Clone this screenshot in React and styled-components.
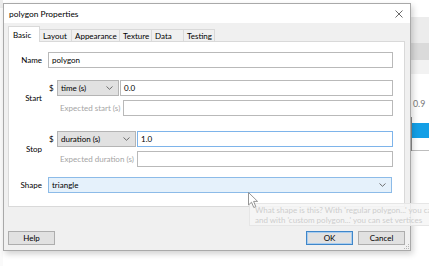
import styled, { createGlobalStyle } from 'styled-components';

const GlobalStyle = createGlobalStyle`
  html, body {
    margin: 0;
    padding: 0;
    background: #ffffff;
    overflow: hidden;
  }
  body {
    font-family: Lato, "Open Sans", "Liberation Sans", sans-serif;
    font-size: 8px;
    color: #000;
  }
`;

const Screen = styled.div`
  position: relative;
  display: flex;
  width: 429px;
  height: 266px;
  overflow: hidden;
  background: #ffffff;
`;

const Gutter = styled.div`
  width: 3px;
  background: linear-gradient(#ececec 0, #ececec 8px, #fafafa 8px);
`;

const Dialog = styled.div`
  margin-top: 3px;
  width: 408px;
  height: 248px;
  display: flex;
  flex-direction: column;
  border: 1px solid #a9a9a9;
  box-sizing: border-box;
  background: #f0f0f0;
  box-shadow: 2px 3px 6px rgba(0, 0, 0, 0.18);
  z-index: 1;
`;

const TitleBar = styled.div`
  height: 19px;
  display: flex;
  align-items: center;
  justify-content: space-between;
  padding: 0 7px 0 5px;
  background: #ffffff;
  font-size: 8.4px;
`;

const Body = styled.div`
  flex: 1;
  display: flex;
  flex-direction: column;
  padding: 3px 5px 5px 4px;
`;

const TabStrip = styled.div`
  display: flex;
  align-items: flex-end;
  height: 16px;
`;

const Tab = styled.div`
  width: ${(p) => p.$width}px;
  height: ${(p) => (p.$active ? 16 : 13)}px;
  box-sizing: border-box;
  padding-left: ${(p) => (p.$active ? 4 : 3)}px;
  display: flex;
  align-items: center;
  background: ${(p) => (p.$active ? '#ffffff' : '#f0f0f0')};
  border: 1px solid #d9d9d9;
  border-bottom: ${(p) => (p.$active ? 'none' : '1px solid #d9d9d9')};
  margin-left: ${(p) => (p.$active ? 0 : -1)}px;
  position: relative;
  z-index: ${(p) => (p.$active ? 2 : 1)};
  white-space: nowrap;
`;

const Panel = styled.div`
  height: 166px;
  box-sizing: border-box;
  margin-top: -1px;
  background: #ffffff;
  border: 1px solid #d9d9d9;
  padding: 10px 11px 0 0;
  display: flex;
  flex-direction: column;
`;

const Row = styled.div`
  display: flex;
  align-items: center;
  margin-top: ${(p) => p.$top || 0}px;
`;

const Label = styled.div`
  width: 33px;
  margin-right: 6px;
  text-align: right;
`;

const Fields = styled.div`
  flex: 1;
  display: flex;
  flex-direction: column;
  gap: 4px;
`;

const Line = styled.div`
  display: flex;
  align-items: center;
`;

const Dollar = styled.div`
  width: 8px;
  padding-left: 1px;
`;

const Input = styled.div`
  flex: 1;
  height: 16px;
  box-sizing: border-box;
  border: 1px solid ${(p) => (p.$focus ? '#7eb4ea' : '#b9b9b9')};
  padding-left: 3px;
  display: flex;
  align-items: center;
  background: #ffffff;
`;

const Select = styled.div`
  width: ${(p) => (p.$width ? `${p.$width}px` : 'auto')};
  flex: ${(p) => (p.$width ? 'none' : 1)};
  height: 16px;
  box-sizing: border-box;
  margin-right: 1px;
  display: flex;
  align-items: center;
  justify-content: space-between;
  padding: 0 5px 0 3px;
  background: ${(p) => (p.$light ? '#e5f1fb' : '#e1e1e1')};
  border: 1px solid ${(p) => (p.$light ? '#8cbbe8' : '#b4b4b4')};
`;

const Hint = styled.div`
  width: ${(p) => p.$width}px;
  padding-left: 3px;
  box-sizing: border-box;
  color: #a5a5a5;
  white-space: nowrap;
`;

const Footer = styled.div`
  flex: 1;
  display: flex;
  align-items: flex-end;
  justify-content: space-between;
`;

const ButtonGroup = styled.div`
  display: flex;
  gap: 5px;
`;

const Button = styled.div`
  width: 47px;
  height: 14px;
  box-sizing: border-box;
  display: flex;
  align-items: center;
  justify-content: center;
  background: #e1e1e1;
  border: 1px solid ${(p) => (p.$default ? '#3f86c9' : '#adadad')};
  box-shadow: ${(p) => (p.$default ? 'inset 0 0 0 1px #a9cdef' : 'none')};
`;

const BackApp = styled.div`
  flex: 1;
  display: flex;
  flex-direction: column;
`;

const Band = styled.div`
  height: ${(p) => p.$h}px;
  background: ${(p) => p.$bg};
`;

const BackValue = styled.div`
  height: 14px;
  margin-top: 22px;
  padding-left: 2px;
  font-size: 8.8px;
  color: #777;
  display: flex;
  align-items: center;
`;

const BackTable = styled.div`
  margin-top: 7px;
  border-left: 1px solid #8a8a8a;
  display: flex;
  flex-direction: column;
`;

const Selected = styled.div`
  margin-top: 6px;
  height: 15px;
  background: #149fe6;
`;

const BackRow = styled.div`
  height: 12px;
  border-bottom: 1px solid #bdbdbd;
`;

const Tooltip = styled.div`
  position: absolute;
  left: 249px;
  top: 203px;
  width: 200px;
  height: 23px;
  padding: 2px 5px;
  box-sizing: border-box;
  background: rgba(246, 246, 246, 0.85);
  border: 1px solid #e6e6e6;
  font-size: 8px;
  line-height: 9.5px;
  color: #cdcdcd;
  white-space: nowrap;
  z-index: 3;
`;

const Cursor = styled.svg`
  position: absolute;
  left: 248px;
  top: 192px;
  z-index: 4;
`;

const Grip = styled.svg`
  position: absolute;
  left: 404px;
  top: 244px;
  z-index: 2;
`;

function Chevron() {
  return (
    <svg width="7" height="4" viewBox="0 0 7 4">
      <path d="M0.5 0.5 L3.5 3.3 L6.5 0.5" fill="none" stroke="#606060" strokeWidth="0.9" />
    </svg>
  );
}

function Close() {
  return (
    <svg width="8" height="8" viewBox="0 0 8 8">
      <path d="M0.5 0.5 L7.5 7.5 M7.5 0.5 L0.5 7.5" stroke="#444" strokeWidth="0.8" />
    </svg>
  );
}

const tabs = [
  { name: 'Basic', width: 32 },
  { name: 'Layout', width: 33 },
  { name: 'Appearance', width: 49 },
  { name: 'Texture', width: 33 },
  { name: 'Data', width: 33 },
  { name: 'Testing', width: 32 },
];

function TimeGroup({ label, unit, value, hint, selectWidth, hintWidth, focus, top }) {
  return (
    <Row $top={top}>
      <Label>{label}</Label>
      <Fields>
        <Line>
          <Dollar>$</Dollar>
          <Select $width={selectWidth}>
            <span>{unit}</span>
            <Chevron />
          </Select>
          <Input $focus={focus}>{value}</Input>
        </Line>
        <Line>
          <Dollar />
          <Hint $width={hintWidth}>{hint}</Hint>
          <Input />
        </Line>
      </Fields>
    </Row>
  );
}

export default function App() {
  return (
    <>
      <GlobalStyle />
      <Screen>
        <Gutter />
        <Dialog>
          <TitleBar>
            <span>polygon Properties</span>
            <Close />
          </TitleBar>
          <Body>
            <TabStrip>
              {tabs.map((t, i) => (
                <Tab key={t.name} $active={i === 0} $width={t.width}>
                  {t.name}
                </Tab>
              ))}
            </TabStrip>
            <Panel>
              <Row>
                <Label>Name</Label>
                <Input>polygon</Input>
              </Row>
              <TimeGroup
                top={12}
                label="Start"
                unit="time (s)"
                value="0.0"
                hint="Expected start (s)"
                selectWidth={62}
                hintWidth={66}
              />
              <TimeGroup
                top={15}
                label="Stop"
                unit="duration (s)"
                value="1.0"
                hint="Expected duration (s)"
                selectWidth={79}
                hintWidth={80}
                focus
              />
              <Row $top={10}>
                <Label>Shape</Label>
                <Select $light>
                  <span>triangle</span>
                  <Chevron />
                </Select>
              </Row>
            </Panel>
            <Footer>
              <Button>Help</Button>
              <ButtonGroup>
                <Button $default>OK</Button>
                <Button>Cancel</Button>
              </ButtonGroup>
            </Footer>
          </Body>
        </Dialog>
        <BackApp>
          <Band $h={17} $bg="#ffffff" />
          <Band $h={26} $bg="#ececec" />
          <Band $h={17} $bg="#dadada" />
          <Band $h={14} $bg="#f2f2f2" />
          <BackValue>0.9</BackValue>
          <BackTable>
            <Selected />
            <BackRow />
          </BackTable>
        </BackApp>
        <Tooltip>
          <div>What shape is this? With 'regular polygon...' you can set sides,</div>
          <div>and with 'custom polygon...' you can set vertices</div>
        </Tooltip>
        <Cursor width="11" height="17" viewBox="0 0 11 17">
          <path
            d="M0.5 0.5 L0.5 13 L3.5 10.2 L5.8 15.5 L7.8 14.6 L5.6 9.4 L9.6 9.4 Z"
            fill="#ffffff"
            stroke="#8a8a8a"
            strokeWidth="0.9"
          />
        </Cursor>
        <Grip width="6" height="6" viewBox="0 0 6 6">
          <g fill="#b5b5b5">
            <rect x="4" y="0" width="1" height="1" />
            <rect x="2" y="2" width="1" height="1" />
            <rect x="4" y="2" width="1" height="1" />
            <rect x="0" y="4" width="1" height="1" />
            <rect x="2" y="4" width="1" height="1" />
            <rect x="4" y="4" width="1" height="1" />
          </g>
        </Grip>
      </Screen>
    </>
  );
}
